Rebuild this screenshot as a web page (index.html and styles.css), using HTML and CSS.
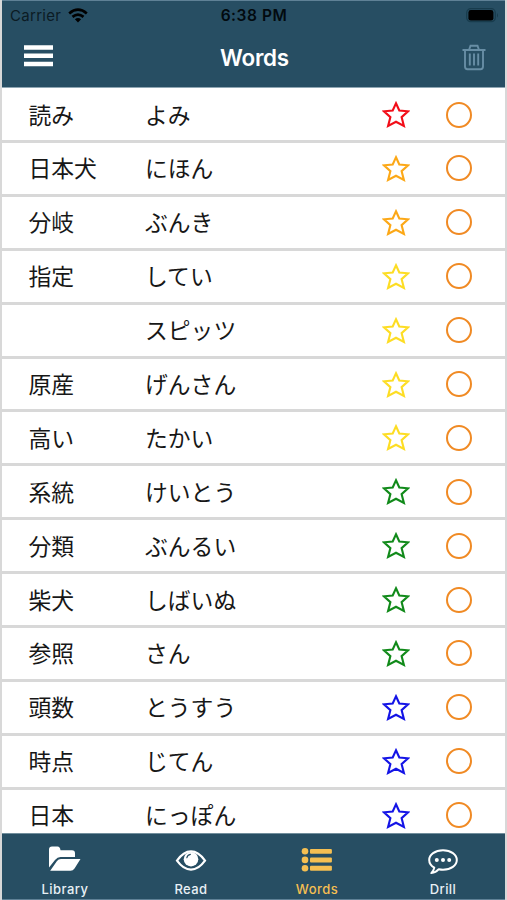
FILE: index.html
```html
<!DOCTYPE html>
<html lang="ja">
<head>
<meta charset="utf-8">
<title>Words</title>
<link rel="stylesheet" href="styles.css">
</head>
<body>
<svg class="defs" aria-hidden="true">
  <symbol id="star" viewBox="0 0 28 27"><path d="M14 2.3 17.3 9.5 26 10.3 19.6 16.1 21.9 24.9 14 20.8 6.1 24.9 8.4 16.1 2 10.3 10.7 9.5Z" fill="none" stroke="currentColor" stroke-width="2.1"/></symbol>
</svg>
<div class="app">
  <header class="header">
    <div class="status">
      <div class="carrier"><span>Carrier</span>
        <svg class="wifi" viewBox="0 0 20 15"><g fill="none" stroke="#000" stroke-width="2.7"><path d="M1.2 5.4Q10-2.2 18.8 5.4"/><path d="M4.5 8.9Q10 4.2 15.5 8.9"/></g><path d="M6.9 11.2Q10 8.6 13.1 11.2L10 14.4Z"/></svg>
      </div>
      <div class="time">6:38 PM</div>
      <svg class="battery" viewBox="0 0 33 15"><rect x=".7" y=".7" width="28.6" height="13" rx="4" fill="none" stroke="#183c4d" stroke-width="1.2"/><rect x="2.4" y="2" width="25" height="10.6" rx="2.4"/><path d="M31 5q2 2.3 0 4.6Z" fill="#183c4d"/></svg>
    </div>
    <div class="nav">
      <svg class="menu" viewBox="0 0 29 22"><path d="M0 2.5H29M0 10.8H29M0 19H29" stroke="#fff" stroke-width="4.6"/></svg>
      <h1>Words</h1>
      <svg class="trash" viewBox="0 0 24 27"><g fill="none" stroke="#688ea5" stroke-width="1.9"><path d="M.5 6H23.5M7 6 8.5 1.7H15.5L17 6M3 6V22.5Q3 25.2 5.5 25.2H18.5Q21 25.2 21 22.5V6"/><path d="M7.8 9.5V21.5M12 9.5V21.5M16.2 9.5V21.5"/></g></svg>
    </div>
  </header>
  <main class="list">
    <div class="row"><span>読み</span><span>よみ</span><svg class="star red"><use href="#star"/></svg><i class="ring"></i></div>
    <div class="row"><span>日本犬</span><span>にほん</span><svg class="star orange"><use href="#star"/></svg><i class="ring"></i></div>
    <div class="row"><span>分岐</span><span>ぶんき</span><svg class="star orange"><use href="#star"/></svg><i class="ring"></i></div>
    <div class="row"><span>指定</span><span>してい</span><svg class="star yellow"><use href="#star"/></svg><i class="ring"></i></div>
    <div class="row"><span></span><span>スピッツ</span><svg class="star yellow"><use href="#star"/></svg><i class="ring"></i></div>
    <div class="row"><span>原産</span><span>げんさん</span><svg class="star yellow"><use href="#star"/></svg><i class="ring"></i></div>
    <div class="row"><span>高い</span><span>たかい</span><svg class="star yellow"><use href="#star"/></svg><i class="ring"></i></div>
    <div class="row"><span>系統</span><span>けいとう</span><svg class="star green"><use href="#star"/></svg><i class="ring"></i></div>
    <div class="row"><span>分類</span><span>ぶんるい</span><svg class="star green"><use href="#star"/></svg><i class="ring"></i></div>
    <div class="row"><span>柴犬</span><span>しばいぬ</span><svg class="star green"><use href="#star"/></svg><i class="ring"></i></div>
    <div class="row"><span>参照</span><span>さん</span><svg class="star green"><use href="#star"/></svg><i class="ring"></i></div>
    <div class="row"><span>頭数</span><span>とうすう</span><svg class="star blue"><use href="#star"/></svg><i class="ring"></i></div>
    <div class="row"><span>時点</span><span>じてん</span><svg class="star blue"><use href="#star"/></svg><i class="ring"></i></div>
    <div class="row"><span>日本</span><span>にっぽん</span><svg class="star blue"><use href="#star"/></svg><i class="ring"></i></div>
  </main>
  <nav class="tabs">
    <div class="tab"><svg viewBox="0 0 32 28"><path fill="currentColor" d="M0 21.5V3.5Q0 .5 3 .5H8.5Q11 .5 11.5 4.2H23Q26 4.2 26 7.2V11H11.5Q8.5 11 6 14ZM1.2 24.7 8 15Q9.4 13 12 13H31.5L25.5 22.4Q24 24.7 21.5 24.7Z"/></svg><span>Library</span></div>
    <div class="tab"><svg viewBox="0 0 32 28"><path d="M2 14.6Q8.5 5.4 16 5.4T30 14.6Q23.5 23.6 16 23.6T2 14.6Z" fill="none" stroke="currentColor" stroke-width="2.2"/><circle cx="16" cy="13.2" r="7.3" fill="currentColor"/><path d="M11.8 11.8Q12.4 9 15.4 8.4" fill="none" stroke="#274e63" stroke-width="1.1" stroke-linecap="round"/></svg><span>Read</span></div>
    <div class="tab active"><svg viewBox="0 0 32 28"><g fill="currentColor"><circle cx="4" cy="5.3" r="3.3"/><circle cx="4" cy="13.9" r="3.3"/><circle cx="4" cy="22.2" r="3.3"/><rect x="9" y="2.9" width="21.9" height="4.9" rx="1"/><rect x="9" y="11.5" width="21.9" height="4.9" rx="1"/><rect x="9" y="19.8" width="21.9" height="4.9" rx="1"/></g></svg><span>Words</span></div>
    <div class="tab"><svg viewBox="0 0 32 28"><path d="M16 4.3C8 4.3 2.2 8.6 2.2 14C2.2 17.2 4.4 20 7.3 21.7Q6.8 24.7 4.3 27.1Q8.8 26.8 11.8 23.2Q14 23.7 16 23.7C24 23.7 29.8 19.5 29.8 14S24 4.3 16 4.3Z" fill="none" stroke="currentColor" stroke-width="2" stroke-linejoin="round"/><g fill="currentColor"><circle cx="9.8" cy="13.9" r="2"/><circle cx="16" cy="13.9" r="2"/><circle cx="22.2" cy="13.9" r="2"/></g></svg><span>Drill</span></div>
  </nav>
</div>
</body>
</html>
```
FILE: styles.css
```css
* { box-sizing: border-box; }
body { margin: 0; background: #fff; font-family: Inter, "Noto Sans CJK JP", sans-serif; }
svg { display: block; overflow: visible; }
.defs { position: absolute; width: 0; height: 0; }
.app {
  width: 507px; height: 900px; overflow: hidden;
  display: flex; flex-direction: column;
  border-left: 2px solid #d8d8d8; border-right: 2px solid #d8d8d8;
}
.header, .tabs {
  flex: none; margin: 0 -2px; background: #274e63;
  border: solid #5f8196; border-width: 0 1px 0 2px;
}
.header { height: 88px; border-top-width: 1px; border-bottom: 1px solid #8fa6b3; }
.status {
  display: grid; grid-template-columns: 1fr auto 1fr; align-items: center;
  height: 29px; padding: 0 7px 0 8px; font-size: 15px; color: #000;
}
.carrier { display: flex; align-items: center; gap: 7px; color: #0b1b24; letter-spacing: .3px; }
.wifi { width: 20px; height: 15px; }
.time { font-weight: 600; font-size: 15.5px; letter-spacing: .55px; line-height: 18px; color: #020a0f; margin-right: 1px; }
.battery { width: 33px; height: 15px; justify-self: end; margin-top: -1px; }
.nav {
  display: grid; grid-template-columns: 1fr auto 1fr; align-items: center;
  height: 56px; padding: 0 20px 0 22px;
}
.menu { width: 29px; height: 22px; margin-top: -5px; }
h1 { margin: 0 1px 1px 0; color: #fff; font-size: 22.4px; line-height: 28px; font-weight: 600; letter-spacing: -.25px; }
.trash { width: 24px; height: 27px; justify-self: end; margin-top: -1px; }
.list { flex: 1; min-height: 0; overflow: hidden; }
.row {
  display: grid; grid-template-columns: 116.5px 1fr 28px 62px; align-items: center;
  height: 53.9px; padding: 0 33px 0 26.5px;
  border-bottom: 3px solid #d8d8d8;
  font: 22.8px/32px "Noto Sans CJK JP", sans-serif; color: #171717;
}
.row:first-child { height: 55px; padding-top: 1px; }
.star { width: 28px; height: 27px; }
.ring { width: 26px; height: 26px; margin-left: 36px; border: 2px solid #f08a24; border-radius: 50%; }
.red { color: #f20d18; }
.orange { color: #fca817; }
.yellow { color: #fddd24; }
.green { color: #118a1a; }
.blue { color: #1414e6; }
.tabs { height: 67px; display: grid; grid-template-columns: repeat(4, 1fr); border-top: 1px solid #718e9c; border-bottom-width: 1px; }
.tab { display: flex; flex-direction: column; align-items: center; color: #fff; padding-top: 12px; }
.tab svg { width: 32px; height: 28px; margin-right: 1px; }
.tab span { margin-top: 7px; font-size: 13px; line-height: 16px; font-weight: 500; letter-spacing: .45px; color: #e8f0f5; }
.active, .tab.active span { color: #f5bf52; }
```
